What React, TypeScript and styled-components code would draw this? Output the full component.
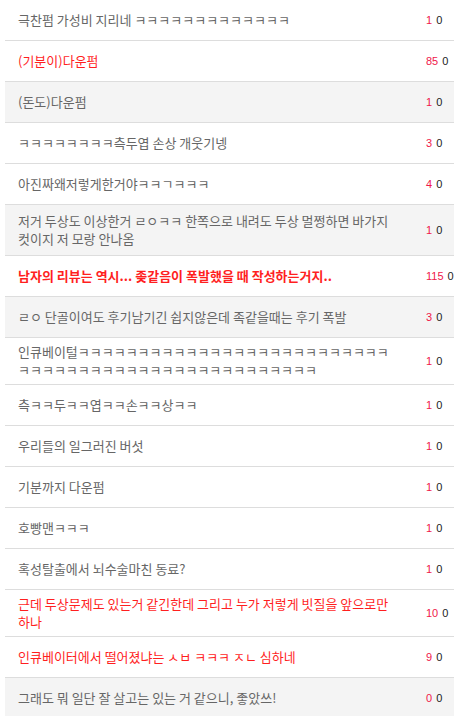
import React from 'react';
import styled, { createGlobalStyle } from 'styled-components';

type Comment = {
    text: string
    up: number
    down: number
    tone?: 'red' | 'hot'
    shaded?: boolean
    roomy?: boolean
}

const comments: Comment[] = [
    { text: '극찬펌 가성비 지리네 ㅋㅋㅋㅋㅋㅋㅋㅋㅋㅋㅋㅋㅋ', up: 1, down: 0 },
    { text: '(기분이)다운펌', up: 85, down: 0, tone: 'red' },
    { text: '(돈도)다운펌', up: 1, down: 0, shaded: true },
    { text: 'ㅋㅋㅋㅋㅋㅋㅋㅋ측두엽 손상 개웃기넹', up: 3, down: 0 },
    { text: '아진짜왜저렇게한거야ㅋㅋㄱㅋㅋㅋ', up: 4, down: 0 },
    { text: '저거 두상도 이상한거 ㄹㅇㅋㅋ 한쪽으로 내려도 두상 멀쩡하면 바가지 컷이지 저 모랑 안나옴', up: 1, down: 0, shaded: true, roomy: true },
    { text: '남자의 리뷰는 역시... 좆같음이 폭발했을 때 작성하는거지..', up: 115, down: 0, tone: 'hot' },
    { text: 'ㄹㅇ 단골이여도 후기남기긴 쉽지않은데 족같을때는 후기 폭발', up: 3, down: 0, shaded: true },
    { text: '인큐베이털' + 'ㅋ'.repeat(51), up: 1, down: 0 },
    { text: '측ㅋㅋ두ㅋㅋ엽ㅋㅋ손ㅋㅋ상ㅋㅋ', up: 1, down: 0 },
    { text: '우리들의 일그러진 버섯', up: 1, down: 0 },
    { text: '기분까지 다운펌', up: 1, down: 0 },
    { text: '호빵맨ㅋㅋㅋ', up: 1, down: 0 },
    { text: '혹성탈출에서 뇌수술마친 동료?', up: 1, down: 0 },
    { text: '근데 두상문제도 있는거 같긴한데 그리고 누가 저렇게 빗질을 앞으로만 하나', up: 10, down: 0, tone: 'red' },
    { text: '인큐베이터에서 떨어졌냐는 ㅅㅂ ㅋㅋㅋ ㅈㄴ 심하네', up: 9, down: 0, tone: 'red' },
    { text: '그래도 뭐 일단 잘 살고는 있는 거 같으니, 좋았쓰!', up: 0, down: 0, shaded: true },
]

export default function App() {
    return (
        <>
            <GlobalStyle />
            <CommentList>
                {comments.map((c, i) => (
                    <CommentRow key={i} $shaded={c.shaded} $roomy={c.roomy}>
                        <CommentText $tone={c.tone}>{c.text}</CommentText>
                        <Votes>
                            <Up>{c.up}</Up>
                            <Down>{c.down}</Down>
                        </Votes>
                    </CommentRow>
                ))}
            </CommentList>
        </>
    )
}

const GlobalStyle = createGlobalStyle`
    body {
        margin: 0;
        background: #fff;
        font-family: "Noto Sans CJK KR", "Noto Sans", sans-serif;
    }
`

const CommentList = styled.ul`
    list-style: none;
    margin: 0 0 0 5px;
    padding: 0;
    width: 449px;
`

const CommentRow = styled.li<{ $shaded?: boolean; $roomy?: boolean }>`
    display: flex;
    align-items: center;
    box-sizing: content-box;
    min-height: ${p => (p.$roomy ? 26 : 30)}px;
    padding: ${p => (p.$roomy ? 7 : 5)}px 0 ${p => (p.$roomy ? 7 : 5)}px 13px;
    border-bottom: 1px solid #dddddd;
    background-color: ${p => (p.$shaded ? '#f4f4f4' : '#ffffff')};
`

const CommentText = styled.div<{ $tone?: 'red' | 'hot' }>`
    flex: 0 0 382px;
    font-size: 13px;
    line-height: 18px;
    color: ${p => (p.$tone ? '#ff1f1f' : '#666666')};
    font-weight: ${p => (p.$tone === 'hot' ? 700 : 400)};
    word-break: break-all;
`

const Votes = styled.div`
    margin-left: 26px;
    display: flex;
    gap: 4px;
    font-family: "Liberation Sans", Arial, sans-serif;
    font-size: 11px;
    line-height: 14px;
`

const Up = styled.span`
    color: #f0174a;
`

const Down = styled.span`
    color: #222222;
`
